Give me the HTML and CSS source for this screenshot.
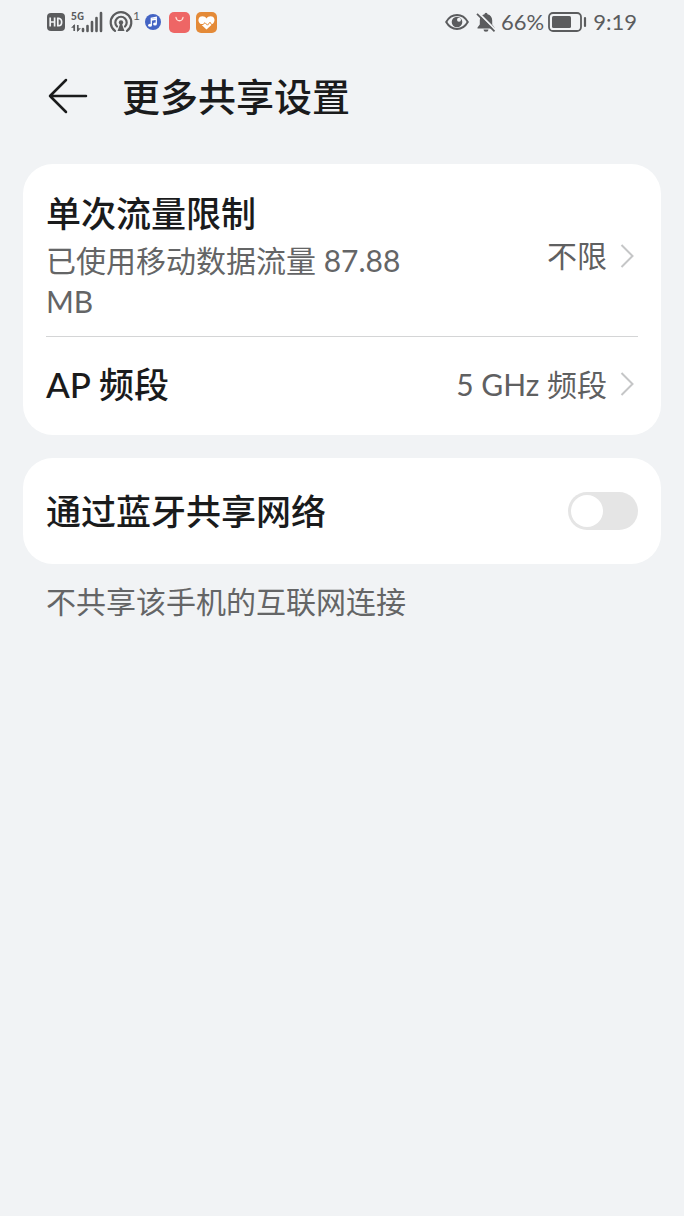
FILE: index.html
```html
<!DOCTYPE html>
<html lang="zh-CN">
<head>
<meta charset="utf-8">
<meta name="viewport" content="width=device-width, initial-scale=1">
<title>更多共享设置</title>
<link rel="stylesheet" href="styles.css">
</head>
<body>
<div class="status">
  <div class="status-left">
    <svg class="ico-hd" width="18" height="18" viewBox="0 0 18 18" aria-label="HD">
      <rect width="18" height="18" rx="4" fill="#5b5c5e"/>
      <path d="M3.2 4.5v9M7.600 4.500v9M3.200 9h4.400M10.800 5.300v7.400h1c3.800 0 3.800-7.400 0-7.400z" fill="none" stroke="#f1f3f5" stroke-width="1.700"/>
    </svg>
    <div class="network">
      <span class="network-type">5G</span>
      <svg width="32" height="22" viewBox="0 0 32 22" aria-hidden="true">
        <path d="M3.2 20v-6M6.800 14v6" stroke="#5b5c5e" stroke-width="1.7"/>
        <path d="M0 16.800 4 13v3.800zM10 17.200 6 21v-3.800z" fill="#5b5c5e"/>
        <path d="M12 18v2M16.500 15v5M21 11v9M25.500 7v13M30 2v18" stroke="#5b5c5e" stroke-width="2.600" stroke-linecap="round"/>
      </svg>
    </div>
    <div class="hotspot">
      <svg width="24" height="22" viewBox="0 0 24 22" fill="none" stroke="#5b5c5e" stroke-width="2.200" stroke-linecap="round" aria-hidden="true">
        <path d="M6 19.800A10.300 10.300 0 1 1 18 19.800"/>
        <path d="M8 15.500a5.700 5.700 0 1 1 8 0"/>
        <path d="M12 10.500 8.500 20h7z" fill="#5b5c5e" stroke="none"/>
        <circle cx="12" cy="11.500" r="2.200" fill="#5b5c5e" stroke="none"/>
      </svg>
      <span class="hotspot-count">1</span>
    </div>
    <svg class="ico-music" width="16" height="16" viewBox="0 0 16 16" aria-hidden="true">
      <circle cx="8" cy="8" r="8" fill="#4464c4"/>
      <path d="M6.300 11V4.300l5-1v6.500M6.300 6l5-1" fill="none" stroke="#fff" stroke-width="1.300"/>
      <ellipse cx="5" cy="11.200" rx="1.900" ry="1.500" fill="#fff"/>
      <ellipse cx="10" cy="10" rx="1.900" ry="1.500" fill="#fff"/>
    </svg>
    <svg class="ico-app" width="21" height="21" viewBox="0 0 21 21" aria-hidden="true">
      <rect width="21" height="21" rx="5" fill="#ee6665"/>
      <path d="M7 5.500c.8 4.300 6.200 4.300 7 0" fill="none" stroke="#ffe0d8" stroke-width="1.300" stroke-linecap="round"/>
    </svg>
    <svg width="21" height="21" viewBox="0 0 21 21" aria-hidden="true">
      <rect width="21" height="21" rx="5" fill="#e48a38"/>
      <path d="M10.500 17.500 3.500 11C1.200 7.800 3 4.200 6.300 4.200c1.800 0 3.400.8 4.200 2.200.8-1.400 2.400-2.200 4.200-2.200 3.300 0 5.100 3.600 2.800 6.800z" fill="#fff"/>
      <path d="M1 12.500h6l2-1.800 2.500 2.500 2.500-3 1.500 2.300H20" fill="none" stroke="#e48a38"/>
    </svg>
  </div>
  <div class="status-right">
    <svg width="24" height="18" viewBox="0 0 24 18" aria-hidden="true">
      <path d="M1.200 9C6.500-.3 17.500-.3 22.800 9 17.500 18.300 6.500 18.300 1.200 9z" fill="none" stroke="#5b5c5e" stroke-width="2"/>
      <circle cx="12" cy="9" r="5.300" fill="#5b5c5e"/>
      <circle cx="14" cy="6.800" r="2" fill="#f1f3f5"/>
    </svg>
    <svg class="ico-bell" width="20" height="20" viewBox="0 0 20 20" aria-hidden="true">
      <path d="M8.500 2.200a1.500 1.500 0 0 1 3 0c3 .7 4.700 3 4.700 6v4.300l2.300 3v1h-17v-1l2.300-3V8.200c0-3 1.700-5.300 4.700-6zM7.500 17.500h5a2.500 2.300 0 0 1-5 0z" fill="#5b5c5e"/>
      <path d="M2.200.5 20 18.300" stroke="#f1f3f5" stroke-width="1.800"/>
      <path d="M1 1.800 18.500 19.300" stroke="#5b5c5e" stroke-width="1.800"/>
    </svg>
    <span class="percent">66%</span>
    <svg class="ico-battery" width="39" height="20" viewBox="0 0 39 20" aria-hidden="true">
      <rect x="1" y="1" width="32" height="18" rx="4" fill="none" stroke="#5b5c5e" stroke-width="1.800"/>
      <rect x="4" y="4" width="19" height="12" rx="1.500" fill="#5b5c5e"/>
      <path d="M37 6v8" stroke="#5b5c5e" stroke-width="2.200" stroke-linecap="round"/>
    </svg>
    <span>9:19</span>
  </div>
</div>

<header class="header">
  <button class="back" type="button" aria-label="返回">
    <svg width="40" height="36" viewBox="0 0 40 36" fill="none" stroke="#1a1b1c" stroke-width="2.500" stroke-linecap="round" stroke-linejoin="round" aria-hidden="true">
      <path d="M38 18H2M18 2 2 18l16 16"/>
    </svg>
  </button>
  <h1 class="title">更多共享设置</h1>
</header>

<main class="main">
  <section class="card">
    <button class="row row-limit" type="button">
      <span class="row-text">
        <span class="label">单次流量限制</span>
        <span class="detail">已使用移动数据流量 87.88 MB</span>
      </span>
      <span class="value">不限</span>
      <svg class="chevron" width="14" height="26" viewBox="0 0 14 26" aria-hidden="true"><path d="M1.500 2 12.500 13l-11 11"/></svg>
    </button>
    <button class="row row-band" type="button">
      <span class="row-text"><span class="label">AP 频段</span></span>
      <span class="value">5 GHz 频段</span>
      <svg class="chevron" width="14" height="26" viewBox="0 0 14 26" aria-hidden="true"><path d="M1.500 2 12.500 13l-11 11"/></svg>
    </button>
  </section>

  <section class="card">
    <div class="row row-bluetooth">
      <label class="row-text label" for="bluetooth">通过蓝牙共享网络</label>
      <input class="switch" id="bluetooth" type="checkbox" role="switch" aria-describedby="bluetooth-note">
    </div>
  </section>
  <p class="note" id="bluetooth-note">不共享该手机的互联网连接</p>
</main>
</body>
</html>
```
FILE: styles.css
```css
* {
  box-sizing: border-box;
}

body {
  margin: 0;
  min-height: 100vh;
  background: #f1f3f5;
  color: #1a1b1c;
  font-family: Lato, "Noto Sans CJK SC", sans-serif;
}

button {
  border: 0;
  background: none;
  color: inherit;
  font: inherit;
  text-align: left;
  cursor: pointer;
}

svg {
  display: block;
  flex: none;
}

.status {
  display: flex;
  justify-content: space-between;
  height: 44px;
  padding: 0 47px;
  color: #5b5c5e;
  font-size: 22px;
  line-height: 44px;
}

.status-left,
.status-right {
  display: flex;
  align-items: center;
}

.status-left {
  gap: 6px;
}

.network {
  position: relative;
}

.network-type {
  position: absolute;
  top: -1px;
  left: 0;
  font: 700 10px/12px "Noto Sans CJK SC", sans-serif;
}

.hotspot {
  display: flex;
  align-items: flex-start;
}

.hotspot-count {
  width: 6px;
  font-size: 12px;
  line-height: 10px;
}

.ico-app {
  margin-left: 2px;
}

.ico-bell {
  margin: 0 5px 0 7px;
}

.ico-battery {
  margin: 0 6px 0 4px;
}

.header {
  display: flex;
  align-items: center;
  gap: 34px;
  height: 104px;
  padding: 0 48px;
}

.back {
  padding: 0;
}

.title {
  margin: 0;
  font-size: 38px;
  font-weight: 500;
  line-height: 56px;
}

.main {
  padding: 16px 23px;
}

.card {
  margin-bottom: 23px;
  padding: 0 23px;
  border-radius: 30px;
  background: #fff;
}

.row {
  display: flex;
  align-items: center;
  width: 100%;
}

.row-limit {
  padding: 25px 0 14px;
  border-bottom: 1px solid #d4d5d6;
}

.row-band {
  padding: 23px 0 27px;
}

.row-bluetooth {
  padding: 29px 0;
}

.row-text {
  max-width: 66%;
  margin-right: auto;
}

.label {
  display: block;
  font-size: 35px;
  font-weight: 500;
  line-height: 48px;
}

.detail {
  display: block;
  padding-top: 3px;
  color: #646566;
  font-size: 30px;
  line-height: 41px;
}

.value {
  color: #5f6061;
  font-size: 30px;
  line-height: 41px;
}

.chevron {
  margin: 0 4px 0 13px;
  fill: none;
  stroke: #c5c6c7;
  stroke-width: 2px;
}

.switch {
  appearance: none;
  display: flex;
  align-items: center;
  width: 70px;
  height: 38px;
  margin: 0;
  padding: 3px;
  border-radius: 19px;
  background: #e5e5e5;
  cursor: pointer;
}

.switch::before {
  content: "";
  width: 32px;
  height: 32px;
  border-radius: 50%;
  background: #fff;
}

.switch:checked {
  justify-content: flex-end;
  background: #0a59f7;
}

.note {
  margin: -6px 23px 0;
  color: #646566;
  font-size: 30px;
  line-height: 41px;
}
```
